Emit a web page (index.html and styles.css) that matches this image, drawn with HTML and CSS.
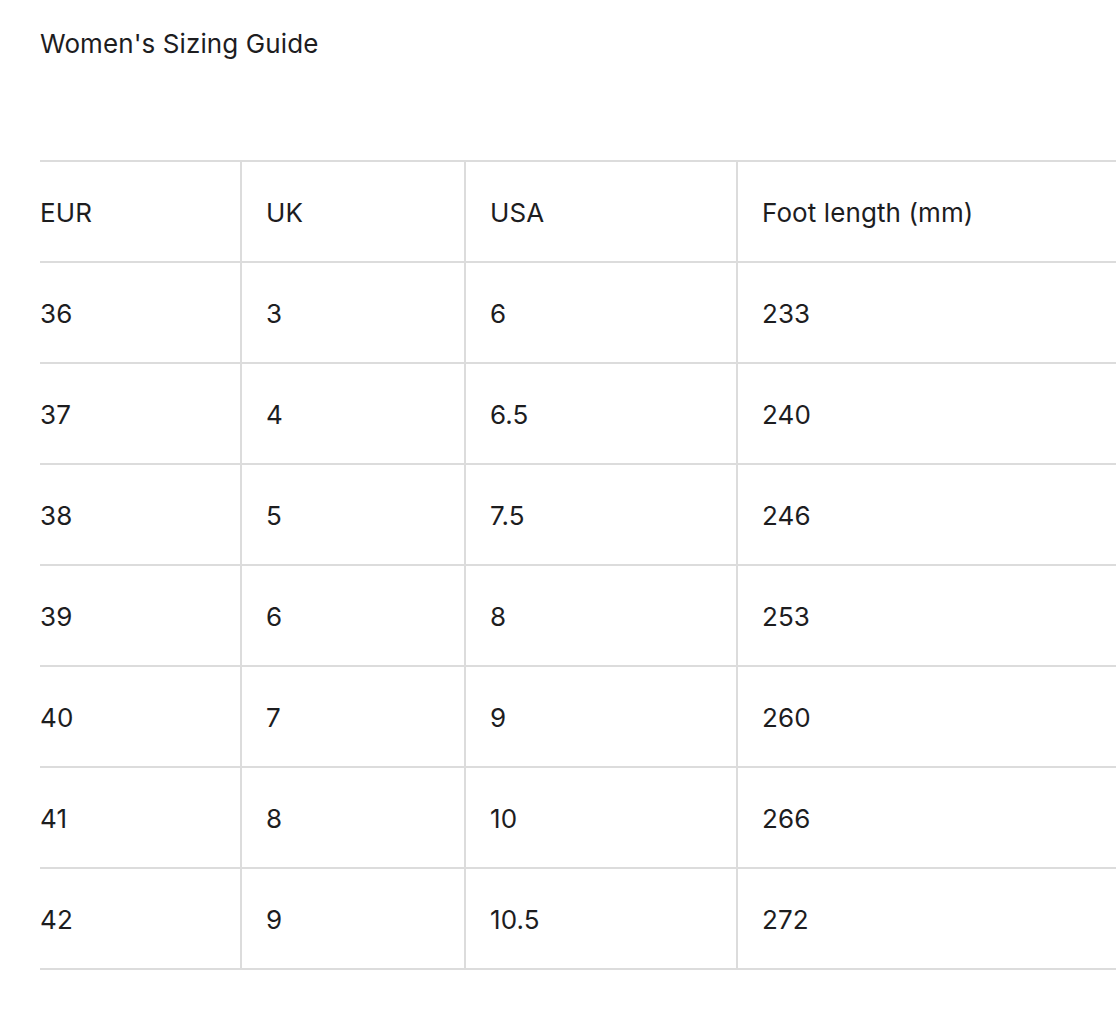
FILE: index.html
```html
<!DOCTYPE html>
<html lang="en">
<head>
<meta charset="utf-8">
<title>Women's Sizing Guide</title>
<link rel="stylesheet" href="styles.css">
</head>
<body>
<main class="page">
  <h1 class="title">Women's Sizing Guide</h1>
  <table class="size-table">
    <colgroup>
      <col class="col-eur">
      <col class="col-uk">
      <col class="col-usa">
      <col class="col-foot">
    </colgroup>
    <tbody>
      <tr><td>EUR</td><td>UK</td><td>USA</td><td>Foot length (mm)</td></tr>
      <tr><td>36</td><td>3</td><td>6</td><td>233</td></tr>
      <tr><td>37</td><td>4</td><td>6.5</td><td>240</td></tr>
      <tr><td>38</td><td>5</td><td>7.5</td><td>246</td></tr>
      <tr><td>39</td><td>6</td><td>8</td><td>253</td></tr>
      <tr><td>40</td><td>7</td><td>9</td><td>260</td></tr>
      <tr><td>41</td><td>8</td><td>10</td><td>266</td></tr>
      <tr><td>42</td><td>9</td><td>10.5</td><td>272</td></tr>
    </tbody>
  </table>
</main>
</body>
</html>
```

FILE: styles.css
```css
html {
  overflow: hidden;
}
body {
  margin: 0;
  background: #ffffff;
  color: #1d1d1f;
  font-family: Inter, "Liberation Sans", sans-serif;
}
.page {
  padding: 0 0 0 40px;
}
.title {
  margin: 28px 0 0;
  font-size: 26px;
  line-height: 32px;
  font-weight: 400;
  letter-spacing: 0.1px;
}
.size-table {
  margin-top: 100px;
  border-collapse: collapse;
  table-layout: fixed;
  width: 1120px;
  font-size: 26px;
}
.col-eur { width: 201px; }
.col-uk { width: 224px; }
.col-usa { width: 272px; }
.size-table td {
  height: 98px;
  padding: 1px 24px 0;
  border-top: 2px solid #dcdcdc;
  border-bottom: 2px solid #dcdcdc;
  border-left: 2px solid #dcdcdc;
  vertical-align: middle;
  white-space: nowrap;
  letter-spacing: 0.1px;
}
.size-table td:first-child {
  padding-left: 0;
  border-left: none;
}
```
